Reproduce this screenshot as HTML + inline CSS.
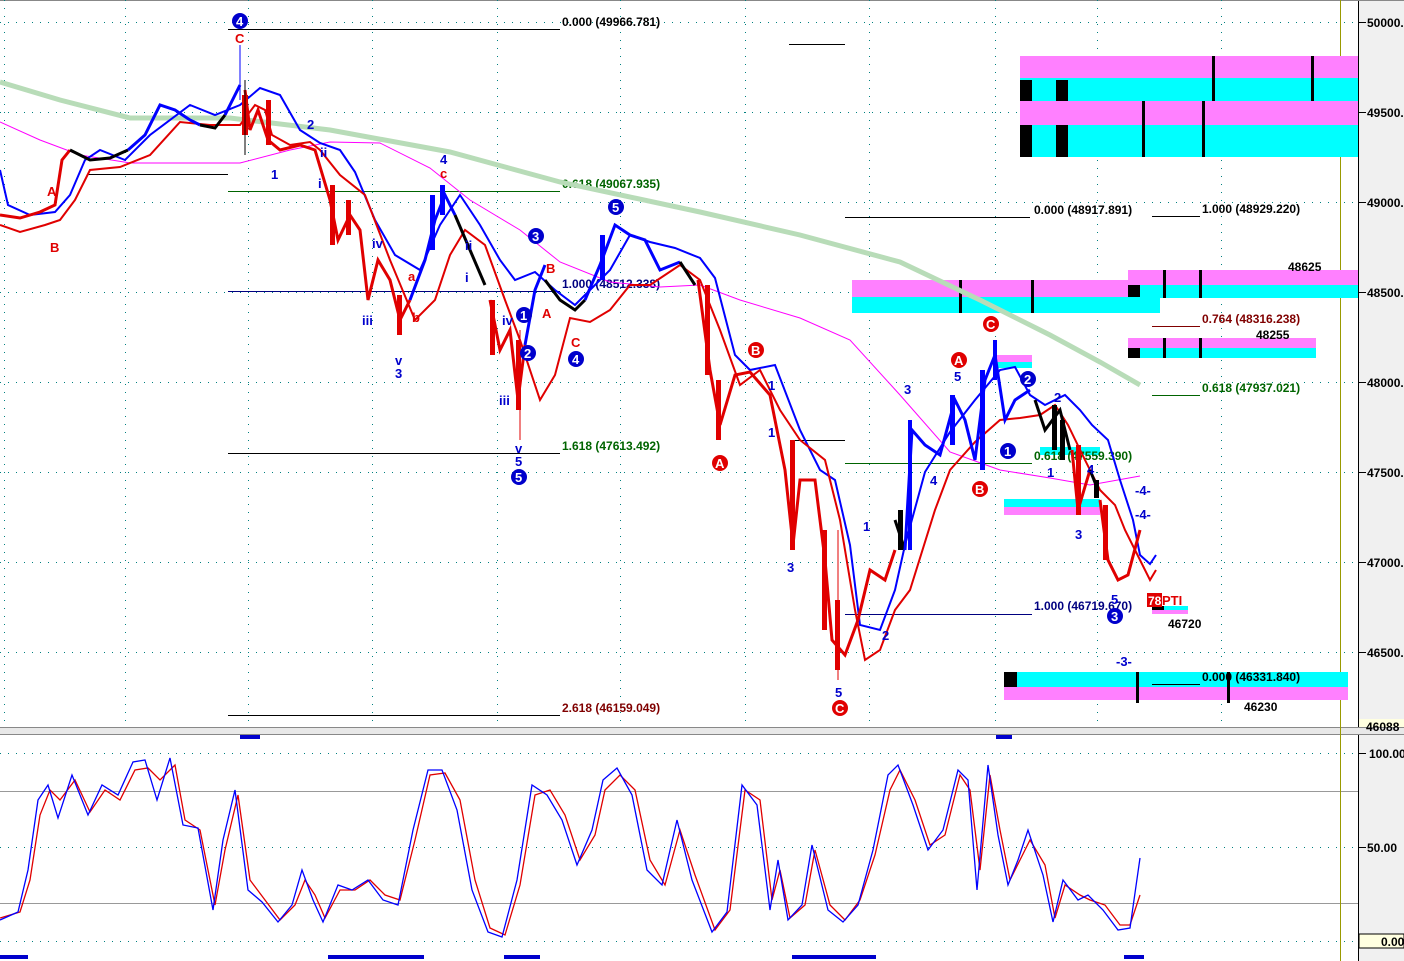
<!DOCTYPE html>
<html><head><meta charset="utf-8"><style>
html,body{margin:0;padding:0;background:#fff;}
svg{display:block;font-family:"Liberation Sans",sans-serif;}
.t{font-weight:bold;font-size:12px;}
.w{font-size:13px;font-weight:bold;}
</style></head><body>
<svg width="1404" height="961" viewBox="0 0 1404 961" xmlns="http://www.w3.org/2000/svg">
<rect x="0" y="0" width="1404" height="961" fill="#fff"/>
<!-- axis bg -->
<rect x="1358" y="0" width="46" height="961" fill="#f0f0f0"/>
<line x1="1358.5" y1="0" x2="1358.5" y2="961" stroke="#000"/>
<line x1="0" y1="0.5" x2="1404" y2="0.5" stroke="#888"/>
<!-- separator -->
<rect x="0" y="727" width="1404" height="8" fill="#e8e8e8"/>
<line x1="0" y1="727.5" x2="1404" y2="727.5" stroke="#888"/>
<line x1="0" y1="734.5" x2="1404" y2="734.5" stroke="#888"/>
<!-- grid dotted -->
<g stroke="#008080" stroke-dasharray="1,7" stroke-width="1">
<line x1="0" y1="22.5" x2="1358" y2="22.5"/><line x1="0" y1="112.5" x2="1358" y2="112.5"/>
<line x1="0" y1="202.5" x2="1358" y2="202.5"/><line x1="0" y1="292.5" x2="1358" y2="292.5"/>
<line x1="0" y1="382.5" x2="1358" y2="382.5"/><line x1="0" y1="472.5" x2="1358" y2="472.5"/>
<line x1="0" y1="562.5" x2="1358" y2="562.5"/><line x1="0" y1="652.5" x2="1358" y2="652.5"/>
<line x1="0" y1="753.5" x2="1358" y2="753.5"/><line x1="0" y1="847.5" x2="1358" y2="847.5"/><line x1="0" y1="941.5" x2="1358" y2="941.5"/>
<line x1="4.5" y1="0" x2="4.5" y2="727"/><line x1="125.5" y1="0" x2="125.5" y2="727"/><line x1="248.5" y1="0" x2="248.5" y2="727"/>
<line x1="372.5" y1="0" x2="372.5" y2="727"/><line x1="497.5" y1="0" x2="497.5" y2="727"/><line x1="620.5" y1="0" x2="620.5" y2="727"/>
<line x1="745.5" y1="0" x2="745.5" y2="727"/><line x1="869.5" y1="0" x2="869.5" y2="727"/><line x1="995.5" y1="0" x2="995.5" y2="727"/>
<line x1="1097.5" y1="0" x2="1097.5" y2="727"/><line x1="1221.5" y1="0" x2="1221.5" y2="727"/>
</g>
<line x1="0" y1="791.5" x2="1358" y2="791.5" stroke="#999"/>
<line x1="0" y1="903.5" x2="1358" y2="903.5" stroke="#999"/>
<line x1="1340.5" y1="0" x2="1340.5" y2="961" stroke="#9a9a00"/>
<!-- boxes -->
<g>
<rect x="1020" y="56" width="338" height="22" fill="#ff80ff"/><rect x="1020" y="78" width="338" height="23" fill="#00ffff"/>
<rect x="1020" y="101" width="338" height="24" fill="#ff80ff"/><rect x="1020" y="125" width="338" height="32" fill="#00ffff"/>
<rect x="1020" y="80" width="12" height="21" fill="#000"/><rect x="1056" y="80" width="12" height="21" fill="#000"/>
<rect x="1020" y="125" width="12" height="32" fill="#000"/><rect x="1056" y="125" width="12" height="32" fill="#000"/>
<rect x="1212" y="56" width="3" height="45" fill="#000"/><rect x="1311" y="56" width="3" height="45" fill="#000"/>
<rect x="1142" y="101" width="3" height="56" fill="#000"/><rect x="1202" y="101" width="3" height="56" fill="#000"/>
<rect x="852" y="280" width="308" height="17" fill="#ff80ff"/><rect x="852" y="297" width="308" height="16" fill="#00ffff"/>
<rect x="959" y="280" width="3" height="33" fill="#000"/><rect x="1031" y="280" width="3" height="33" fill="#000"/>
<rect x="1128" y="270" width="230" height="15" fill="#ff80ff"/><rect x="1128" y="285" width="230" height="13" fill="#00ffff"/>
<rect x="1128" y="285" width="12" height="12" fill="#000"/><rect x="1163" y="270" width="3" height="28" fill="#000"/><rect x="1199" y="270" width="3" height="28" fill="#000"/>
<rect x="1128" y="338" width="188" height="10" fill="#ff80ff"/><rect x="1128" y="348" width="188" height="10" fill="#00ffff"/>
<rect x="1128" y="348" width="12" height="10" fill="#000"/><rect x="1163" y="338" width="3" height="20" fill="#000"/><rect x="1199" y="338" width="3" height="20" fill="#000"/>
<rect x="996" y="355" width="36" height="7" fill="#ff80ff"/><rect x="996" y="362" width="36" height="6" fill="#00ffff"/>
<rect x="1004" y="499" width="96" height="8" fill="#00ffff"/><rect x="1004" y="507" width="96" height="8" fill="#ff80ff"/>
<rect x="1040" y="447" width="60" height="8" fill="#00ffff"/>
<rect x="1004" y="672" width="344" height="15" fill="#00ffff"/><rect x="1004" y="687" width="344" height="13" fill="#ff80ff"/>
<rect x="1004" y="672" width="13" height="15" fill="#000"/><rect x="1136" y="672" width="3" height="31" fill="#000"/><rect x="1227" y="672" width="3" height="31" fill="#000"/>
<rect x="1152" y="606" width="36" height="4" fill="#00ffff"/><rect x="1152" y="610" width="36" height="4" fill="#ff80ff"/><rect x="1152" y="606" width="12" height="4" fill="#000"/>
</g>
<!-- fib lines -->
<g stroke-width="1">
<line x1="228" y1="29.5" x2="560" y2="29.5" stroke="#000"/>
<line x1="789" y1="44.5" x2="845" y2="44.5" stroke="#000"/>
<line x1="88" y1="174.5" x2="228" y2="174.5" stroke="#000"/>
<line x1="228" y1="191.5" x2="560" y2="191.5" stroke="#006400"/>
<line x1="228" y1="291.5" x2="560" y2="291.5" stroke="#000080"/>
<line x1="228" y1="453.5" x2="560" y2="453.5" stroke="#000"/>
<line x1="228" y1="715.5" x2="560" y2="715.5" stroke="#000"/>
<line x1="845" y1="217.5" x2="1030" y2="217.5" stroke="#000"/>
<line x1="1152" y1="216.5" x2="1200" y2="216.5" stroke="#000"/>
<line x1="1152" y1="326.5" x2="1200" y2="326.5" stroke="#800000"/>
<line x1="1152" y1="395.5" x2="1200" y2="395.5" stroke="#006400"/>
<line x1="845" y1="463.5" x2="1032" y2="463.5" stroke="#006400"/>
<line x1="790" y1="440.5" x2="845" y2="440.5" stroke="#000"/>
<line x1="845" y1="614.5" x2="1032" y2="614.5" stroke="#000080"/>
<line x1="1152" y1="684.5" x2="1200" y2="684.5" stroke="#000"/>
</g>
<g class="t">
<text x="562" y="26" fill="#000">0.000 (49966.781)</text>
<text x="562" y="188" fill="#006400">0.618 (49067.935)</text>
<text x="562" y="288" fill="#000080">1.000 (48512.338)</text>
<text x="562" y="450" fill="#006400">1.618 (47613.492)</text>
<text x="562" y="712" fill="#800000">2.618 (46159.049)</text>
<text x="1034" y="214" fill="#000">0.000 (48917.891)</text>
<text x="1202" y="213" fill="#000">1.000 (48929.220)</text>
<text x="1288" y="271" fill="#000">48625</text>
<text x="1202" y="323" fill="#800000">0.764 (48316.238)</text>
<text x="1256" y="339" fill="#000">48255</text>
<text x="1202" y="392" fill="#006400">0.618 (47937.021)</text>
<text x="1034" y="460" fill="#006400">0.618 (47559.390)</text>
<text x="1034" y="610" fill="#000080">1.000 (46719.670)</text>
<text x="1168" y="628" fill="#000">46720</text>
<text x="1202" y="681" fill="#000">0.000 (46331.840)</text>
<text x="1244" y="711" fill="#000">46230</text>
</g>
<rect x="1147" y="593" width="15" height="14" fill="#e00000"/>
<text x="1148" y="605" font-size="12" font-weight="bold" fill="#fff">78</text>
<text x="1162" y="605" font-size="13" font-weight="bold" fill="#e00000">PTI</text>
<!-- MAs -->
<polyline fill="none" stroke="#b8dcb8" stroke-width="5" points="0,82 60,100 130,118 230,118 330,130 450,152 560,182 700,212 800,235 900,262 980,300 1050,335 1100,362 1140,385"/>
<polyline fill="none" stroke="#ff00ff" stroke-width="1" points="0,122 40,140 80,155 130,163 180,163 240,163 290,150 330,142 380,143 430,168 470,200 520,230 560,262 610,282 660,287 700,285 740,300 800,318 850,340 900,395 950,452 1000,470 1050,478 1090,485 1140,476"/>
<!-- upper blue band -->
<polyline fill="none" stroke="#0000ff" stroke-width="2" points="0,170 8,205 30,215 55,212 70,195 85,160 100,150 125,160 150,135 190,105 215,115 240,105 260,88 280,95 300,130 320,143 340,150 355,172 375,220 395,255 420,270 440,225 460,195 480,225 500,260 515,280 535,272 555,290 575,305 590,290 610,270 630,235 650,242 675,248 700,258 715,278 735,355 750,370 775,365 800,430 820,470 835,480 850,545 860,625 880,630 895,590 905,545 925,472 950,432 975,400 1000,370 1015,367 1030,395 1045,405 1065,395 1080,410 1092,425 1108,440 1120,480 1133,520 1140,555 1150,564 1156,555"/>
<!-- lower red band -->
<polyline fill="none" stroke="#e00000" stroke-width="2" points="0,225 20,232 45,225 60,220 75,200 90,170 120,167 150,155 180,122 210,125 240,125 255,105 265,110 272,135 290,145 310,142 320,150 340,175 365,195 390,260 415,320 435,300 450,255 465,230 485,245 505,300 520,340 540,400 555,375 570,318 590,322 610,310 630,285 650,285 680,265 700,280 720,330 740,385 760,370 780,410 800,440 825,460 840,520 855,610 865,660 880,650 895,610 910,590 935,510 950,470 975,442 1000,420 1020,418 1040,415 1055,405 1068,425 1085,460 1100,490 1115,505 1125,530 1140,560 1150,580 1156,570"/>
<!-- price path -->
<polyline fill="none" stroke="#e00000" stroke-width="3" points="0,215 20,218 40,212 55,205 62,160 70,150"/>
<polyline fill="none" stroke="#000" stroke-width="3" points="70,150 90,160 110,158 128,150"/>
<polyline fill="none" stroke="#0000ff" stroke-width="3" points="128,150 145,135 160,105 175,110 190,120 200,125"/>
<polyline fill="none" stroke="#000" stroke-width="3" points="200,125 215,128 225,115"/>
<polyline fill="none" stroke="#0000ff" stroke-width="3" points="225,115 240,85"/>
<polyline fill="none" stroke="#e00000" stroke-width="3" points="245,90 250,130 258,110 268,140 280,150 300,145 315,150 330,200 338,240 350,215 360,230 368,300 378,260 390,280 400,320 410,300"/>
<polyline fill="none" stroke="#0000ff" stroke-width="3" points="410,300 425,260 435,220 445,195 455,215"/>
<polyline fill="none" stroke="#000" stroke-width="3" points="455,215 470,250 485,285"/>
<polyline fill="none" stroke="#e00000" stroke-width="3" points="490,300 500,350 510,330 518,400 525,345"/>
<polyline fill="none" stroke="#0000ff" stroke-width="3" points="525,345 535,290 545,265"/>
<polyline fill="none" stroke="#000" stroke-width="3" points="545,280 560,300 575,310 585,300"/>
<polyline fill="none" stroke="#0000ff" stroke-width="3" points="585,300 600,265 615,225 630,235 645,240 660,270 680,262"/>
<polyline fill="none" stroke="#000" stroke-width="3" points="680,262 695,285"/>
<polyline fill="none" stroke="#e00000" stroke-width="3" points="698,280 710,370 720,425 735,375 750,372 770,395 785,470 793,545 800,480 815,480 825,560 832,640 845,655 858,620"/>
<polyline fill="none" stroke="#e00000" stroke-width="3" points="858,620 870,570 885,580 895,550"/>
<polyline fill="none" stroke="#000" stroke-width="3" points="895,520 905,550"/>
<polyline fill="none" stroke="#0000ff" stroke-width="3" points="905,550 912,430 925,445 940,455 955,400 965,420 975,460 985,380 995,355 1005,420 1015,400 1030,390"/>
<polyline fill="none" stroke="#000" stroke-width="3" points="1035,400 1045,430 1060,410 1070,450"/>
<polyline fill="none" stroke="#e00000" stroke-width="3" points="1072,450 1078,510 1090,470"/>
<polyline fill="none" stroke="#000" stroke-width="3" points="1090,470 1098,490"/>
<polyline fill="none" stroke="#e00000" stroke-width="3" points="1100,500 1108,560 1118,580 1128,575 1136,545 1140,530"/>
<!-- candle bodies sampled -->
<g fill="#e00000">
<rect x="330" y="185" width="5" height="60"/><rect x="346" y="200" width="5" height="35"/><rect x="397" y="295" width="5" height="40"/>
<rect x="490" y="300" width="5" height="55"/><rect x="516" y="340" width="5" height="70"/><rect x="705" y="285" width="5" height="90"/>
<rect x="716" y="380" width="5" height="60"/><rect x="790" y="440" width="5" height="110"/><rect x="822" y="530" width="5" height="100"/>
<rect x="835" y="600" width="5" height="70"/><rect x="1076" y="445" width="5" height="70"/><rect x="1103" y="505" width="5" height="55"/>
<rect x="242" y="95" width="6" height="40"/><rect x="266" y="100" width="5" height="45"/>
</g>
<g fill="#0000ff">
<rect x="430" y="195" width="5" height="55"/><rect x="440" y="185" width="5" height="30"/><rect x="600" y="235" width="5" height="45"/>
<rect x="908" y="420" width="4" height="130"/><rect x="950" y="395" width="5" height="50"/><rect x="980" y="370" width="5" height="100"/>
<rect x="993" y="340" width="4" height="40"/>
</g>
<g fill="#000"><rect x="1052" y="405" width="5" height="45"/><rect x="1060" y="420" width="5" height="40"/><rect x="1094" y="480" width="5" height="18"/><rect x="898" y="510" width="5" height="40"/></g>
<line x1="240" y1="45" x2="240" y2="100" stroke="#0000ff"/>
<line x1="245" y1="80" x2="245" y2="155" stroke="#000"/>
<line x1="838" y1="530" x2="838" y2="680" stroke="#e00000"/>
<line x1="520" y1="330" x2="520" y2="440" stroke="#e00000"/>
<!-- wave labels -->
<g class="w">
<circle cx="240" cy="21" r="8" fill="#0000cc"/><text x="236" y="26" fill="#fff">4</text>
<text x="235" y="43" fill="#e00000">C</text>
<text x="47" y="196" fill="#e00000">A</text><text x="50" y="252" fill="#e00000">B</text>
<text x="271" y="179" fill="#0000cc">1</text><text x="307" y="129" fill="#0000cc">2</text>
<text x="318" y="188" fill="#0000cc">i</text><text x="320" y="157" fill="#0000cc">ii</text>
<text x="440" y="164" fill="#0000cc">4</text><text x="440" y="178" fill="#e00000">c</text>
<text x="372" y="248" fill="#0000cc">iv</text><text x="408" y="281" fill="#e00000">a</text><text x="412" y="322" fill="#e00000">b</text>
<text x="362" y="325" fill="#0000cc">iii</text><text x="395" y="365" fill="#0000cc">v</text><text x="395" y="378" fill="#0000cc">3</text>
<text x="465" y="250" fill="#0000cc">ii</text><text x="465" y="282" fill="#0000cc">i</text>
<text x="502" y="325" fill="#0000cc">iv</text><text x="499" y="405" fill="#0000cc">iii</text>
<text x="515" y="453" fill="#0000cc">v</text><text x="515" y="466" fill="#0000cc">5</text>
<circle cx="519" cy="477" r="8" fill="#0000cc"/><text x="515" y="482" fill="#fff">5</text>
<circle cx="524" cy="315" r="8" fill="#0000cc"/><text x="520" y="320" fill="#fff">1</text>
<circle cx="528" cy="353" r="8" fill="#0000cc"/><text x="524" y="358" fill="#fff">2</text>
<circle cx="536" cy="236" r="8" fill="#0000cc"/><text x="532" y="241" fill="#fff">3</text>
<circle cx="576" cy="359" r="8" fill="#0000cc"/><text x="572" y="364" fill="#fff">4</text>
<circle cx="616" cy="207" r="8" fill="#0000cc"/><text x="612" y="212" fill="#fff">5</text>
<text x="542" y="318" fill="#e00000">A</text><text x="546" y="273" fill="#e00000">B</text><text x="571" y="347" fill="#e00000">C</text>
<circle cx="756" cy="350" r="8" fill="#e00000"/><text x="751" y="355" fill="#fff">B</text>
<circle cx="720" cy="463" r="8" fill="#e00000"/><text x="715" y="468" fill="#fff">A</text>
<text x="768" y="390" fill="#0000cc">1</text><text x="768" y="437" fill="#0000cc">1</text><text x="787" y="572" fill="#0000cc">3</text>
<text x="863" y="531" fill="#0000cc">1</text><text x="882" y="640" fill="#0000cc">2</text><text x="835" y="697" fill="#0000cc">5</text>
<circle cx="840" cy="708" r="8" fill="#e00000"/><text x="835" y="713" fill="#fff">C</text>
<text x="904" y="394" fill="#0000cc">3</text><text x="930" y="485" fill="#0000cc">4</text><text x="954" y="381" fill="#0000cc">5</text>
<circle cx="959" cy="360" r="8" fill="#e00000"/><text x="954" y="365" fill="#fff">A</text>
<circle cx="991" cy="324" r="8" fill="#e00000"/><text x="986" y="329" fill="#fff">C</text>
<circle cx="980" cy="489" r="8" fill="#e00000"/><text x="975" y="494" fill="#fff">B</text>
<circle cx="1008" cy="451" r="8" fill="#0000cc"/><text x="1004" y="456" fill="#fff">1</text>
<circle cx="1028" cy="379" r="8" fill="#0000cc"/><text x="1024" y="384" fill="#fff">2</text>
<text x="1054" y="402" fill="#0000cc">2</text><text x="1047" y="477" fill="#0000cc">1</text><text x="1087" y="474" fill="#0000cc">4</text>
<text x="1075" y="539" fill="#0000cc">3</text><text x="1111" y="604" fill="#0000cc">5</text>
<circle cx="1115" cy="616" r="8" fill="#0000cc"/><text x="1111" y="621" fill="#fff">3</text>
<text x="1135" y="495" fill="#0000cc">-4-</text><text x="1135" y="519" fill="#0000cc">-4-</text><text x="1116" y="666" fill="#0000cc">-3-</text>
</g>
<!-- stochastic -->
<polyline fill="none" stroke="#e00000" stroke-width="1.3" points="0,918 20,912 30,880 40,815 50,790 60,800 75,780 90,812 105,790 120,800 135,770 148,768 160,780 175,765 185,820 200,830 215,905 225,850 238,795 250,880 265,900 280,920 295,905 305,880 315,895 325,918 340,890 355,890 370,880 385,895 400,900 415,840 430,775 445,773 460,800 475,880 490,928 505,935 520,885 535,795 550,790 565,815 580,860 595,835 605,790 620,775 635,790 650,860 665,885 680,830 695,875 715,930 730,910 745,790 760,800 772,900 780,870 790,918 805,905 815,850 830,905 845,920 860,900 875,855 890,790 900,770 915,800 930,845 945,835 960,775 970,790 980,870 990,775 1000,830 1010,880 1020,860 1030,840 1045,865 1055,918 1065,885 1080,895 1090,900 1105,905 1120,925 1130,925 1140,895"/>
<polyline fill="none" stroke="#0000ff" stroke-width="1.3" points="0,920 18,912 28,870 38,800 48,785 58,818 72,775 88,815 102,785 118,795 133,762 145,760 157,800 170,758 183,825 198,828 213,910 223,840 235,790 248,890 262,902 278,922 292,905 302,870 313,900 323,922 338,885 352,890 368,880 383,900 398,905 413,830 428,770 442,770 457,810 472,890 488,932 502,937 517,880 532,785 547,795 562,820 577,865 592,830 603,780 617,768 632,795 647,870 662,885 677,820 692,880 712,932 727,912 742,785 757,805 770,910 778,860 788,920 802,905 812,845 828,910 843,922 858,905 873,850 888,775 898,765 913,805 928,850 943,830 958,770 968,780 977,890 988,765 998,835 1008,885 1018,860 1028,830 1043,875 1053,922 1063,880 1078,900 1088,895 1103,910 1118,930 1130,928 1140,858"/>
<!-- bottom markers -->
<g fill="#0000cc">
<rect x="240" y="735" width="20" height="4"/><rect x="996" y="735" width="16" height="4"/>
<rect x="0" y="955" width="28" height="4"/><rect x="328" y="955" width="96" height="4"/><rect x="504" y="955" width="36" height="4"/>
<rect x="792" y="955" width="84" height="4"/><rect x="1124" y="955" width="20" height="4"/>
</g>
<!-- axis labels -->
<g stroke="#000">
<line x1="1358" y1="22.5" x2="1366" y2="22.5"/><line x1="1358" y1="112.5" x2="1366" y2="112.5"/><line x1="1358" y1="202.5" x2="1366" y2="202.5"/>
<line x1="1358" y1="292.5" x2="1366" y2="292.5"/><line x1="1358" y1="382.5" x2="1366" y2="382.5"/><line x1="1358" y1="472.5" x2="1366" y2="472.5"/>
<line x1="1358" y1="562.5" x2="1366" y2="562.5"/><line x1="1358" y1="652.5" x2="1366" y2="652.5"/>
<line x1="1358" y1="753.5" x2="1366" y2="753.5"/><line x1="1358" y1="847.5" x2="1366" y2="847.5"/>
</g>
<g class="t" fill="#000">
<text x="1367" y="27">50000.</text><text x="1367" y="117">49500.</text><text x="1367" y="207">49000.</text>
<text x="1367" y="297">48500.</text><text x="1367" y="387">48000.</text><text x="1367" y="477">47500.</text>
<text x="1367" y="567">47000.</text><text x="1367" y="657">46500.</text>
<text x="1369" y="758">100.00</text><text x="1367" y="852">50.00</text>
</g>
<rect x="1359" y="719" width="45" height="8" fill="#ffffe0"/>
<text x="1366" y="731" class="t" fill="#000">46088</text>
<rect x="1359" y="934" width="45" height="14" fill="#ffffe0" stroke="#000"/>
<text x="1381" y="946" class="t" fill="#000">0.00</text>
</svg>
</body></html>
